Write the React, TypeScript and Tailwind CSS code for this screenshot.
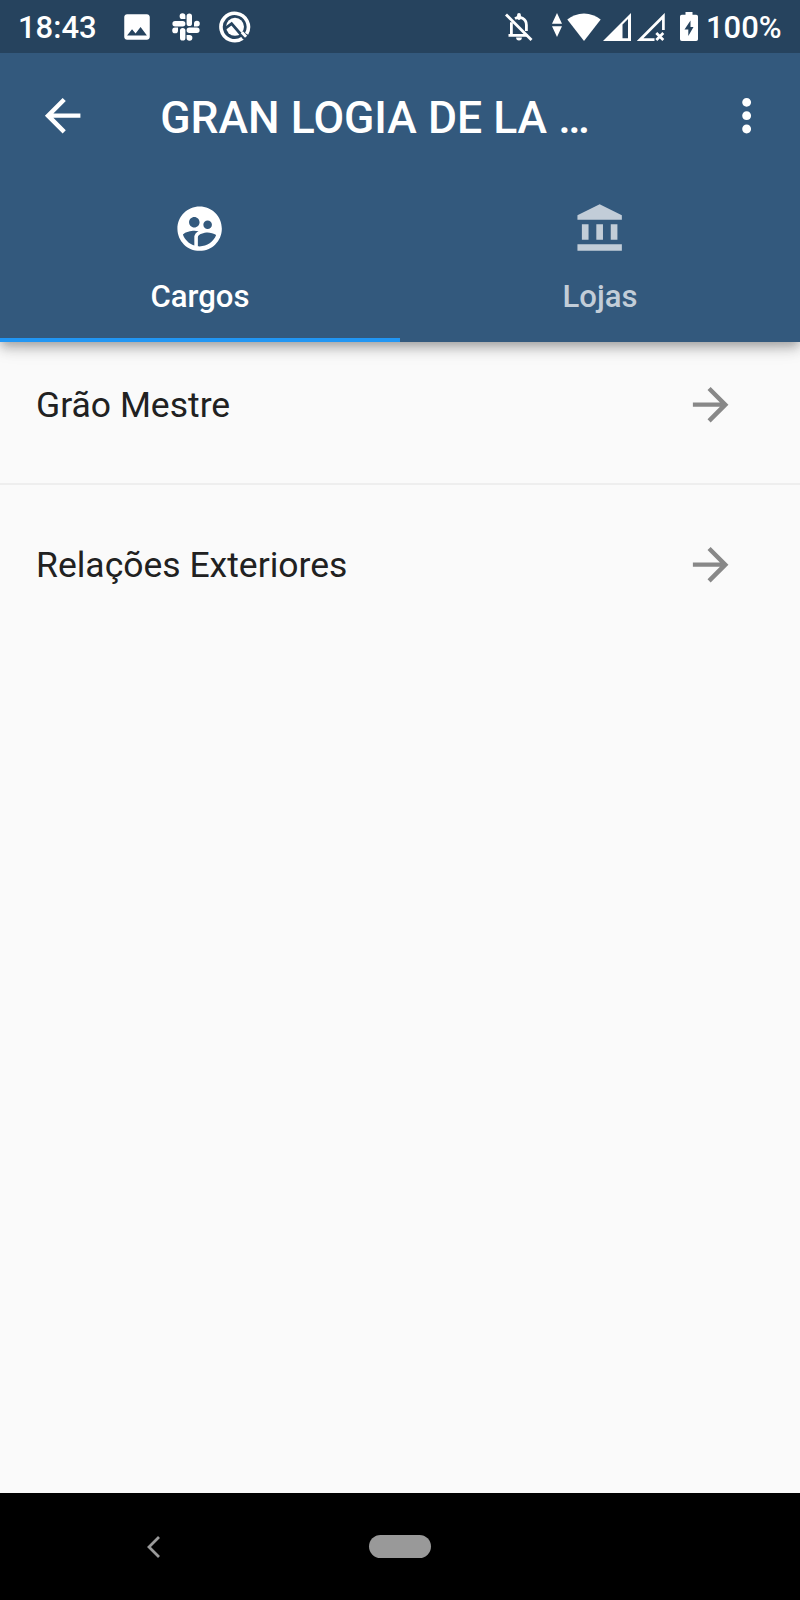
import React from 'react'
import {
  MdArrowBack,
  MdArrowForward,
  MdImage,
  MdMoreVert,
  MdSupervisedUserCircle,
} from 'react-icons/md'

const SlackIcon = () => (
  <svg viewBox="0 0 28 28" className="w-7 h-7" stroke="currentColor" strokeWidth="5.4" strokeLinecap="round">
    <path d="M10.7 10.8H3.1M17.3 10.4V3.1M17.3 17.2h7.6M10.7 17.6v7.3" />
    <g fill="currentColor" stroke="none">
      <path d="M13.4 6V3a2.9 2.9 0 1 0-2.9 3z" />
      <path d="M22 13.5H25a2.9 2.9 0 1 0-3-2.9z" />
      <path d="M14.6 22V25a2.9 2.9 0 1 0 2.9-3z" />
      <path d="M6 14.5H3a2.9 2.9 0 1 0 3 2.9z" />
    </g>
  </svg>
)

const ScreenSearchIcon = () => (
  <svg viewBox="0 0 32 32" className="w-8 h-8" fill="none">
    <path d="M23.6 27.2A13.7 13.7 0 1 1 27.6 22.8" stroke="currentColor" strokeWidth="3.6" />
    <circle cx="16" cy="15.8" r="9" fill="currentColor" />
    <path d="M6 17.6l6.6-5L25 27" stroke="#26435e" strokeWidth="2.8" />
    <path d="M22.8 21.3l4.3 4.5" stroke="currentColor" strokeWidth="3" />
  </svg>
)

const BellOffIcon = () => (
  <svg viewBox="0 0 28 28" className="w-7 h-7" fill="none" stroke="currentColor" strokeWidth="2.8">
    <path d="M1 1.5l25.5 25.5" />
    <path d="M6.4 9.2v12.3M3.5 22.3h19M10 5.6C15 2.8 21.4 5.6 21.4 12v6" />
    <path d="M14 2V5" strokeWidth="3.8" strokeLinecap="round" />
    <path d="M11.1 24.6h5.8a2.9 2.9 0 0 1-5.8 0z" fill="currentColor" stroke="none" />
  </svg>
)

const DataArrowsIcon = () => (
  <svg viewBox="0 0 10 24" className="w-2.5 h-6" fill="currentColor">
    <path d="M5 0l5 10.8H0zM5 24L0 13.2h10z" />
  </svg>
)

const WifiIcon = () => (
  <svg viewBox="0 0 34 28" className="w-[34px] h-7" fill="currentColor">
    <path d="M17 28L.3 6.6C5 2.7 10.5.4 17 .4s12 2.3 16.7 6.2z" />
  </svg>
)

const SignalIcon = () => (
  <svg viewBox="0 0 28 28" className="w-7 h-7" fill="currentColor" fillRule="evenodd">
    <path d="M0 28L28 0v28zM19.5 11.5v13.8h5.5V6z" />
  </svg>
)

const SignalOffIcon = () => (
  <svg viewBox="0 0 28 28" className="w-7 h-7" fill="none" stroke="currentColor" strokeWidth="2.7">
    <path d="M17.5 26.7H3L26.4 3.2v13.8" />
    <path d="M19.3 20l7 7M26.3 20l-7 7" />
  </svg>
)

const BatteryIcon = () => (
  <svg viewBox="0 0 18 29" className="w-[18px] h-[29px]" fill="currentColor" fillRule="evenodd">
    <path d="M5.5 0h7v2.8h3.7A1.8 1.8 0 0 1 18 4.6v22.6a1.8 1.8 0 0 1-1.8 1.8H1.8A1.8 1.8 0 0 1 0 27.2V4.6a1.8 1.8 0 0 1 1.8-1.8h3.7zM10.5 8.5L4.5 17.5h3.8v6.5L13.5 15h-3z" />
  </svg>
)

const BankIcon = () => (
  <svg viewBox="0 0 24 24" className="w-[53.3px] h-[53.3px]" fill="currentColor">
    <path d="M12 1L2 6v2h20V6zM4 10h3v7H4zM10.5 10h3v7h-3zM17 10h3v7h-3zM2 19h20v3H2z" />
  </svg>
)

const StatusBar = () => (
  <div className="relative z-10 h-[53px] shrink-0 bg-[#26435e] flex items-center px-[18px] font-medium text-[31px] leading-none">
    <span className="w-[80px] pt-0.5">18:43</span>
    <MdImage className="ml-[22px] w-[34px] h-[34px]" />
    <div className="ml-[18px]"><SlackIcon /></div>
    <div className="ml-[19px]"><ScreenSearchIcon /></div>
    <div className="ml-auto flex items-center">
      <BellOffIcon />
      <div className="ml-[19px] pb-1"><DataArrowsIcon /></div>
      <div className="ml-[5px]"><WifiIcon /></div>
      <div className="ml-0.5"><SignalIcon /></div>
      <div className="ml-1.5"><SignalOffIcon /></div>
      <div className="ml-[15px]"><BatteryIcon /></div>
      <span className="ml-2 w-[76px] pt-0.5 whitespace-nowrap">100%</span>
    </div>
  </div>
)

const AppBar = () => (
  <div className="h-[125px] flex items-center pl-9 pr-[27px]">
    <MdArrowBack className="w-[53.3px] h-[53.3px]" />
    <h1 className="ml-[71px] flex-1 pt-1.5 text-[44.5px] leading-none font-medium whitespace-nowrap">
      GRAN LOGIA DE LA …
    </h1>
    <MdMoreVert className="w-[53.3px] h-[53.3px]" />
  </div>
)

const Tab = ({ label, icon, active }: { label: string; icon: React.ReactNode; active?: boolean }) => (
  <div
    className={`w-1/2 h-[164px] flex flex-col items-center pt-6 border-b-4 ${
      active ? 'text-white border-[#2196f3]' : 'text-[#c2cdd8] border-transparent'
    }`}
  >
    {icon}
    <span className="mt-6 text-[31.1px] leading-[36px] font-medium">{label}</span>
  </div>
)

const ListItem = ({ title }: { title: string }) => (
  <li className="h-[124px] flex items-center justify-between pt-px pl-9 pr-[63px]">
    <span className="pt-[3px] text-[35.5px] leading-none text-[#212121]">{title}</span>
    <MdArrowForward className="w-[53.3px] h-[53.3px] text-[#888888]" />
  </li>
)

export default function App() {
  return (
    <div className="w-[800px] h-[1600px] flex flex-col overflow-hidden bg-[#fafafa] font-['Roboto',sans-serif] text-white">
      <StatusBar />
      <header className="relative shrink-0 bg-[#33597d] shadow-[0_4px_9px_-2px_rgba(0,0,0,0.2),0_8px_11px_rgba(0,0,0,0.14),0_2px_22px_rgba(0,0,0,0.12)]">
        <AppBar />
        <div className="flex">
          <Tab label="Cargos" icon={<MdSupervisedUserCircle className="w-[53.3px] h-[53.3px]" />} active />
          <Tab label="Lojas" icon={<BankIcon />} />
        </div>
      </header>

      <ul className="flex-1">
        <ListItem title="Grão Mestre" />
        {/* divider */}
        <li className="h-9 flex items-center">
          <div className="w-full h-0.5 bg-[#eeeeee]" />
        </li>
        <ListItem title="Relações Exteriores" />
      </ul>

      {/* system navigation */}
      <nav className="h-[107px] shrink-0 bg-black flex items-center pl-[147px] text-[#9a9a9a]">
        <svg viewBox="0 0 13 22" className="w-[13px] h-[22px]" fill="none" stroke="currentColor" strokeWidth="2.8">
          <path d="M12 1L2 11l10 10" />
        </svg>
        <div className="ml-[209px] w-[62px] h-[23px] rounded-full bg-[#999999]" />
      </nav>
    </div>
  )
}
